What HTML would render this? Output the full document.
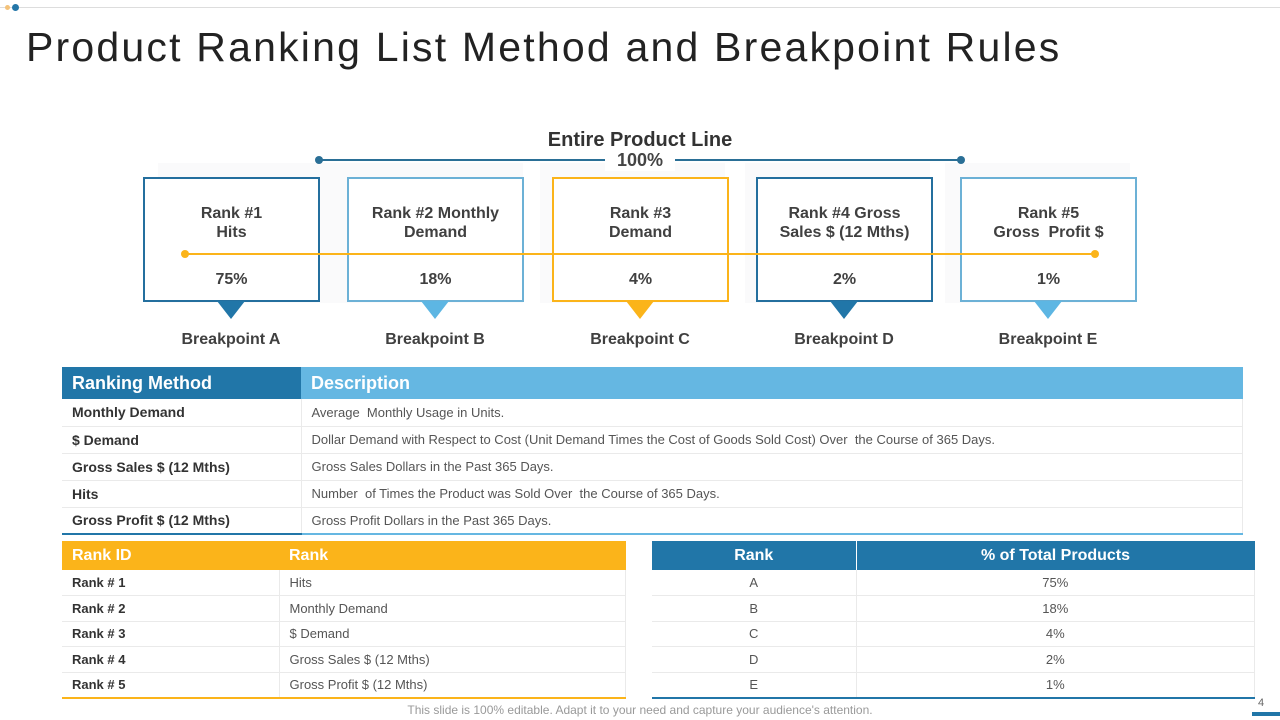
<!DOCTYPE html><html><head><style>
*{margin:0;padding:0;box-sizing:border-box}
body{width:1280px;height:720px;position:relative;background:#fff;font-family:"Liberation Sans",sans-serif;color:#333;overflow:hidden}
.a{position:absolute}
.box{position:absolute;top:177px;width:177px;height:125px;border:2px solid;text-align:center;font-weight:bold;font-size:16px;color:#404040}
.box .t{position:absolute;top:25px;left:0;right:0;line-height:19px}
.box .p{position:absolute;top:92px;left:0;right:0}
.tri{position:absolute;top:301px;width:0;height:0;border-left:14px solid transparent;border-right:14px solid transparent;border-top:18px solid}
.bp{position:absolute;top:331px;width:200px;text-align:center;font-weight:bold;font-size:16px;color:#404040}
.sh{position:absolute;top:163px;width:185px;height:140px;background:#fafafb}
table{position:absolute;border-collapse:collapse}
td{border-bottom:1px solid #eaeaea;border-right:1px solid #eaeaea;padding:0 10px;font-size:13px;color:#555}
th{color:#fff;text-align:left;padding:0 10px;font-weight:bold}
</style></head><body>
<div class="a" style="left:0;top:7px;width:1280px;height:1px;background:#ddd"></div>
<div class="a" style="left:5px;top:5px;width:5px;height:5px;border-radius:50%;background:#f4c27a"></div>
<div class="a" style="left:12px;top:4px;width:7px;height:7px;border-radius:50%;background:#2476a8"></div>
<div class="a" style="left:26px;top:24px;font-size:41px;color:#222;white-space:nowrap;letter-spacing:2.2px">Product Ranking List Method and Breakpoint Rules</div>

<div class="sh" style="left:158px"></div><div class="sh" style="left:338px"></div><div class="sh" style="left:540px"></div><div class="sh" style="left:745px"></div><div class="sh" style="left:945px"></div>
<div class="a" style="left:318px;top:159px;width:644px;height:2px;background:#2a6f96"></div>
<div class="a" style="left:315px;top:156px;width:8px;height:8px;border-radius:50%;background:#2a6f96"></div>
<div class="a" style="left:957px;top:156px;width:8px;height:8px;border-radius:50%;background:#2a6f96"></div>
<div class="a" style="left:540px;top:129px;width:200px;text-align:center;font-weight:bold;font-size:20px;color:#333">Entire Product Line</div>
<div class="a" style="left:605px;top:150px;width:70px;text-align:center;font-weight:bold;font-size:18px;color:#444;background:#fff">100%</div>

<div class="box" style="left:143px;border-color:#246f9e;background:#fff"><div class="t">Rank #1<br>Hits</div><div class="p">75%</div></div>
<div class="box" style="left:347px;border-color:#6cb1d6;background:#fff"><div class="t">Rank #2 Monthly<br>Demand</div><div class="p">18%</div></div>
<div class="box" style="left:552px;border-color:#fbb41a;background:#fff"><div class="t">Rank #3<br>Demand</div><div class="p">4%</div></div>
<div class="box" style="left:756px;border-color:#246f9e;background:#fff"><div class="t">Rank #4 Gross<br>Sales $ (12 Mths)</div><div class="p">2%</div></div>
<div class="box" style="left:960px;border-color:#6cb1d6;background:#fff"><div class="t">Rank #5<br>Gross&nbsp; Profit $</div><div class="p">1%</div></div>
<div class="a" style="left:184px;top:253px;width:911px;height:2px;background:#fbb41a"></div>
<div class="a" style="left:181px;top:250px;width:8px;height:8px;border-radius:50%;background:#fbb41a"></div>
<div class="a" style="left:1091px;top:250px;width:8px;height:8px;border-radius:50%;background:#fbb41a"></div>
<div class="tri" style="left:217px;border-top-color:#2176a8"></div>
<div class="tri" style="left:421px;border-top-color:#5db6e3"></div>
<div class="tri" style="left:626px;border-top-color:#fbb41a"></div>
<div class="tri" style="left:830px;border-top-color:#2176a8"></div>
<div class="tri" style="left:1034px;border-top-color:#5db6e3"></div>
<div class="bp" style="left:131px">Breakpoint A</div><div class="bp" style="left:335px">Breakpoint B</div><div class="bp" style="left:540px">Breakpoint C</div><div class="bp" style="left:744px">Breakpoint D</div><div class="bp" style="left:948px">Breakpoint E</div>

<table style="left:62px;top:367px;width:1181px">
<tr style="height:32px;font-size:18px"><th style="background:#2176a8;width:239px">Ranking Method</th><th style="background:#65b7e2">Description</th></tr>
<tr style="height:27px"><td style="font-weight:bold;font-size:14px;color:#333">Monthly Demand</td><td>Average&nbsp; Monthly Usage in Units.</td></tr>
<tr style="height:27px"><td style="font-weight:bold;font-size:14px;color:#333">$ Demand</td><td>Dollar Demand with Respect to Cost (Unit Demand Times the Cost of Goods Sold Cost) Over&nbsp; the Course of 365 Days.</td></tr>
<tr style="height:27px"><td style="font-weight:bold;font-size:14px;color:#333">Gross Sales $ (12 Mths)</td><td>Gross Sales Dollars in the Past 365 Days.</td></tr>
<tr style="height:27px"><td style="font-weight:bold;font-size:14px;color:#333">Hits</td><td>Number&nbsp; of Times the Product was Sold Over&nbsp; the Course of 365 Days.</td></tr>
<tr style="height:27px"><td style="font-weight:bold;font-size:14px;color:#333;border-bottom:2px solid #2176a8">Gross Profit $ (12 Mths)</td><td style="border-bottom:2px solid #65b7e2">Gross Profit Dollars in the Past 365 Days.</td></tr>
</table>

<table style="left:62px;top:541px;width:564px">
<tr style="height:29px;font-size:16px"><th style="background:#fbb41a;width:217px">Rank ID</th><th style="background:#fbb41a">Rank</th></tr>
<tr style="height:25.5px"><td style="font-weight:bold;color:#333">Rank # 1</td><td>Hits</td></tr>
<tr style="height:25.5px"><td style="font-weight:bold;color:#333">Rank # 2</td><td>Monthly Demand</td></tr>
<tr style="height:25.5px"><td style="font-weight:bold;color:#333">Rank # 3</td><td>$ Demand</td></tr>
<tr style="height:25.5px"><td style="font-weight:bold;color:#333">Rank # 4</td><td>Gross Sales $ (12 Mths)</td></tr>
<tr style="height:25.5px"><td style="font-weight:bold;color:#333;border-bottom:2px solid #fbb41a">Rank # 5</td><td style="border-bottom:2px solid #fbb41a">Gross Profit $ (12 Mths)</td></tr>
</table>

<table style="left:652px;top:541px;width:603px;text-align:center">
<tr style="height:29px;font-size:16px"><th style="background:#2176a8;width:204px;text-align:center;border-right:1px solid #fff">Rank</th><th style="background:#2176a8;text-align:center">% of Total Products</th></tr>
<tr style="height:25.5px"><td>A</td><td>75%</td></tr>
<tr style="height:25.5px"><td>B</td><td>18%</td></tr>
<tr style="height:25.5px"><td>C</td><td>4%</td></tr>
<tr style="height:25.5px"><td>D</td><td>2%</td></tr>
<tr style="height:25.5px"><td style="border-bottom:2px solid #2176a8">E</td><td style="border-bottom:2px solid #2176a8">1%</td></tr>
</table>

<div class="a" style="left:0;top:703px;width:1280px;text-align:center;font-size:12px;color:#999">This slide is 100% editable. Adapt it to your need and capture your audience's attention.</div>
<div class="a" style="left:1258px;top:697px;font-size:11px;color:#666">4</div>
<div class="a" style="left:1252px;top:712px;width:28px;height:4px;background:#2176a8"></div>
</body></html>
